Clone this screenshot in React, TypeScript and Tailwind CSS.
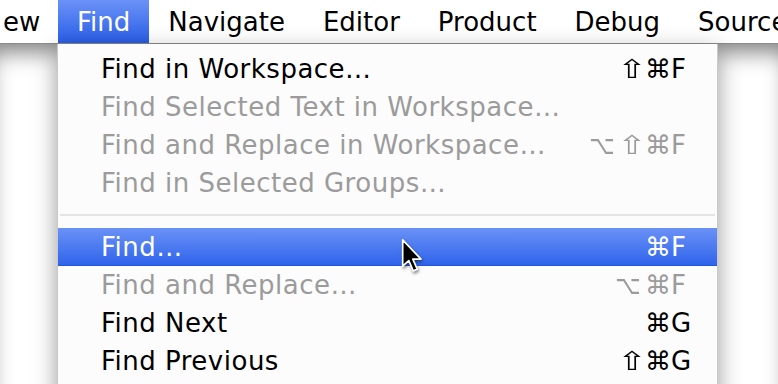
import React from 'react';

type Item =
  | { kind: 'item'; label: string; keys?: string[]; disabled?: boolean; active?: boolean }
  | { kind: 'sep' };

const menuTitles = ['Navigate', 'Editor', 'Product', 'Debug', 'Source'];

const items: Item[] = [
  { kind: 'item', label: 'Find in Workspace…', keys: ['⇧', '⌘', 'F'] },
  { kind: 'item', label: 'Find Selected Text in Workspace…', disabled: true },
  { kind: 'item', label: 'Find and Replace in Workspace…', keys: ['⌥', '⇧', '⌘', 'F'], disabled: true },
  { kind: 'item', label: 'Find in Selected Groups…', disabled: true },
  { kind: 'sep' },
  { kind: 'item', label: 'Find…', keys: ['⌘', 'F'], active: true },
  { kind: 'item', label: 'Find and Replace…', keys: ['⌥', '⌘', 'F'], disabled: true },
  { kind: 'item', label: 'Find Next', keys: ['⌘', 'G'] },
  { kind: 'item', label: 'Find Previous', keys: ['⇧', '⌘', 'G'] },
];

function Key({ k }: { k: string }) {
  if (k === '⇧') {
    return (
      <span className="inline-block w-[25px] text-center">
        <span className="inline-block scale-x-[1.35]">⇧</span>
      </span>
    );
  }
  if (k === '⌥') {
    return (
      <span className="mr-[3px] inline-block w-[28px] text-left">
        <span className="inline-block scale-x-[0.85]">⌥</span>
      </span>
    );
  }
  return <span className="inline-block w-[25px] text-center">{k}</span>;
}

function Shortcut({ keys }: { keys: string[] }) {
  const mods = keys.slice(0, -1);
  const letter = keys[keys.length - 1];
  return (
    <div className="flex items-center gap-[1px]">
      {mods.map((k) => (
        <Key key={k} k={k} />
      ))}
      <span className="inline-block w-[24px] text-left">{letter}</span>
    </div>
  );
}

function Cursor() {
  return (
    <svg
      className="absolute left-[401px] top-[238px] drop-shadow-[1px_2px_1.5px_rgba(0,0,0,0.45)]"
      width="22"
      height="36"
      viewBox="-1 -1 13 21"
    >
      <path
        d="M0 0 L0 15.5 L3.6 12.2 L6.2 18.3 L8.6 17.3 L6 11.3 L10.8 11.3 Z"
        fill="#000"
        stroke="#fff"
        strokeWidth="1"
        strokeLinejoin="round"
      />
    </svg>
  );
}

export default function App() {
  return (
    <div
      className="relative h-[384px] w-[778px] overflow-hidden bg-white text-[26px] leading-none"
      style={{ fontFamily: '"DejaVu Sans", "Liberation Sans", sans-serif' }}
    >
      <div className="flex h-[44px] items-stretch overflow-hidden border-b border-[#8c8c8c] bg-white text-black">
        <div className="flex w-[58px] shrink-0 items-center pl-[3px]">ew</div>
        <div className="flex shrink-0 items-center bg-gradient-to-b from-[#6a91f6] to-[#2a5de7] px-[19px] text-white">
          Find
        </div>
        {menuTitles.map((t) => (
          <div key={t} className="flex shrink-0 items-center whitespace-nowrap px-[19px]">
            {t}
          </div>
        ))}
      </div>

      <div className="h-[340px] bg-white shadow-[inset_0_18px_22px_-10px_rgba(0,0,0,0.5)]" />

      <div className="absolute left-[57px] top-[44px] h-[360px] w-[661px] border-l border-r border-[#c9c9c9] bg-[#fcfcfc] pt-[6px] shadow-[0_8px_22px_rgba(0,0,0,0.4)]">
        {items.map((it, i) =>
          it.kind === 'sep' ? (
            <div key={i} className="flex h-[26px] items-center px-[2px]">
              <div className="h-[2px] w-full bg-[#e4e4e4]" />
            </div>
          ) : (
            <div
              key={i}
              className={`flex h-[38px] items-center justify-between whitespace-nowrap pl-[43px] pr-[22px] ${
                it.active
                  ? 'border-b border-[#1f56e2] bg-gradient-to-b from-[#6a91f6] to-[#2f63ea] text-white'
                  : it.disabled
                    ? 'text-[#9b9b9b]'
                    : 'text-black'
              }`}
            >
              <span className="tracking-[0.5px]">{it.label}</span>
              {it.keys ? <Shortcut keys={it.keys} /> : null}
            </div>
          )
        )}
      </div>

      <Cursor />
    </div>
  );
}
